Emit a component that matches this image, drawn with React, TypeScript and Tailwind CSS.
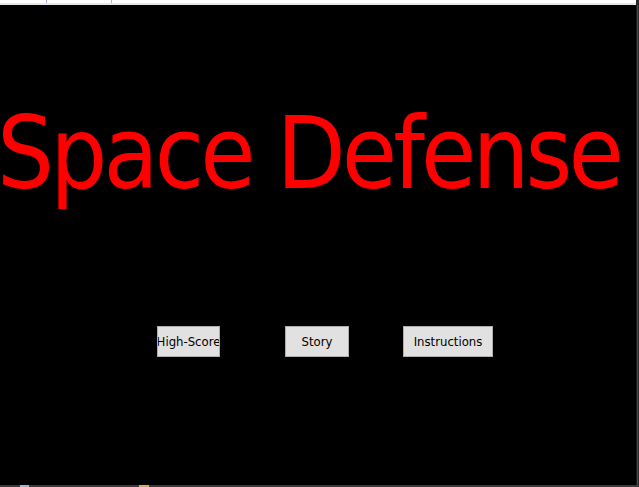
import React from "react";

const MenuButton: React.FC<{ label: string; width: string; className?: string }> = ({
  label,
  width,
  className,
}) => (
  <button
    className={`h-[31px] ${width} ${className ?? ""} flex items-center justify-center overflow-hidden whitespace-nowrap border border-[#adadad] bg-[#e1e1e1] pt-[1px] text-[13px] text-black font-['DejaVu_Sans_Condensed','DejaVu_Sans',sans-serif]`}
  >
    {label}
  </button>
);

export default function App() {
  return (
    <div className="flex h-[487px] w-[639px] flex-col overflow-hidden bg-black">
      {/* window chrome at the top */}
      <div className="flex h-[5px] w-full">
        <div className="flex w-[636px] flex-col">
          <div className="relative h-[3px] bg-white">
            <span className="absolute left-[46px] top-0 h-[3px] w-[1px] bg-[#b9a6c9]" />
            <span className="absolute left-[111px] top-0 h-[3px] w-[1px] bg-[#a7b8d8]" />
          </div>
          <div className="h-[2px] bg-[#e6e6e6]" />
        </div>
        <div className="flex-1 bg-[#2b2b2b]" />
      </div>

      <div className="flex flex-1">
        <main className="flex w-[636px] flex-col bg-black">
          <h1 className="mt-[99px] ml-[-3px] whitespace-nowrap text-[100px] leading-none tracking-[-3.9px] text-[#ff0000] font-['DejaVu_Sans_Condensed','DejaVu_Sans',sans-serif]">
            Space Defense
          </h1>

          <div className="mt-[122px] flex pl-[157px]">
            <MenuButton label="High-Score" width="w-[63px]" />
            <MenuButton label="Story" width="w-[64px]" className="ml-[65px]" />
            <MenuButton label="Instructions" width="w-[90px]" className="ml-[54px]" />
          </div>
        </main>
        <div className="flex flex-1">
          <div className="w-[1px] bg-[#1a1a1a]" />
          <div className="w-[1px] bg-[#4a4a4a]" />
          <div className="flex-1 bg-[#2b2b2b]" />
        </div>
      </div>

      {/* taskbar edge at the bottom */}
      <div className="relative h-[2px] bg-[#3a3a3a]">
        <span className="absolute left-[20px] top-0 h-[2px] w-[9px] bg-[#9fb4c8]" />
        <span className="absolute left-[139px] top-0 h-[2px] w-[10px] bg-[#c8b060]" />
      </div>
    </div>
  );
}
